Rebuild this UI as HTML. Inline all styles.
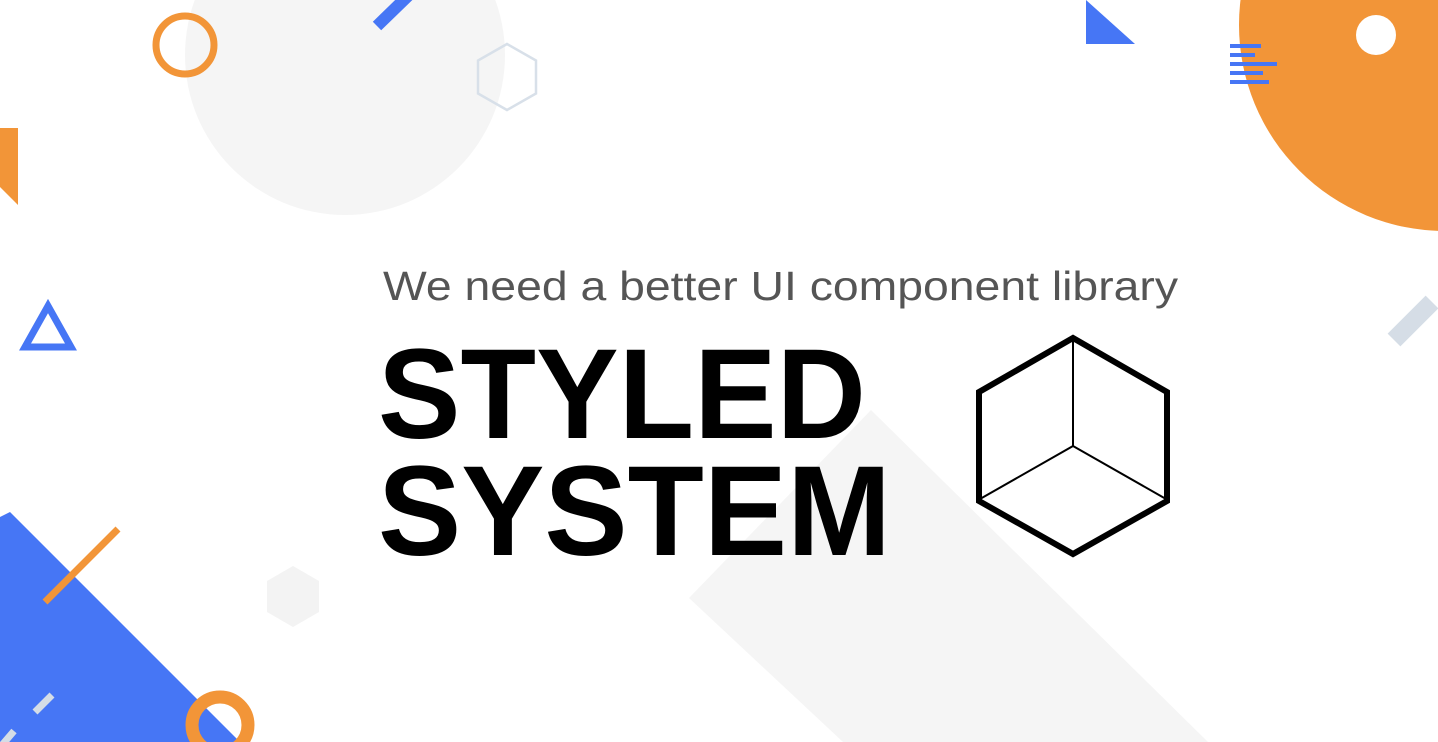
<!DOCTYPE html>
<html><head><meta charset="utf-8"><style>
html,body{margin:0;padding:0;background:#fff;overflow:hidden}
svg{display:block}
</style></head><body>
<svg width="1438" height="742" viewBox="0 0 1438 742" xmlns="http://www.w3.org/2000/svg">
<rect width="1438" height="742" fill="#fff"/>
<circle cx="345" cy="55" r="160" fill="#f5f5f5"/>
<polygon points="689,598 871,410 1208,742 843,742" fill="#f5f5f5"/>
<circle cx="185" cy="45" r="29" fill="none" stroke="#f29538" stroke-width="7"/>
<line x1="377" y1="26" x2="412" y2="-8" stroke="#4676f5" stroke-width="12"/>
<polygon points="507,44 536,60.5 536,93.5 507,110 478,93.5 478,60.5" fill="none" stroke="#d8e0e9" stroke-width="2.5"/>
<polygon points="0,128 18,128 18,205 0,187" fill="#f29538"/>
<polygon points="48,306 71,347 25,347" fill="none" stroke="#4676f5" stroke-width="7"/>
<polygon points="1086,0 1086,44 1135,44" fill="#4676f5"/>
<circle cx="1445" cy="25" r="206" fill="#f29538"/>
<circle cx="1376" cy="35" r="20" fill="#fff"/>
<g fill="#4676f5">
<rect x="1230" y="44" width="31" height="4"/>
<rect x="1230" y="53" width="25" height="4"/>
<rect x="1230" y="62" width="47" height="4"/>
<rect x="1230" y="71" width="33" height="4"/>
<rect x="1230" y="80" width="39" height="4"/>
</g>
<line x1="1394" y1="340" x2="1432" y2="302" stroke="#d5dde6" stroke-width="18"/>
<polygon points="0,517 10,512 240,742 0,742" fill="#4676f5"/>
<line x1="45" y1="602" x2="118" y2="529" stroke="#f29538" stroke-width="7"/>
<line x1="35" y1="712" x2="52" y2="695" stroke="#d5dde6" stroke-width="7"/>
<line x1="2" y1="745" x2="14" y2="731" stroke="#d5dde6" stroke-width="7"/>
<circle cx="220" cy="725" r="28" fill="none" stroke="#f29538" stroke-width="13"/>
<polygon points="293,566 319,581 319,612 293,627 267,612 267,581" fill="#f3f3f3"/>
<text x="383" y="300" font-family="Liberation Sans, sans-serif" font-size="41" fill="#555" textLength="795" lengthAdjust="spacingAndGlyphs">We need a better UI component library</text>
<text x="378" y="438" font-family="Liberation Sans, sans-serif" font-size="128" font-weight="bold" fill="#000" textLength="488" lengthAdjust="spacingAndGlyphs">STYLED</text>
<text x="378" y="555" font-family="Liberation Sans, sans-serif" font-size="128" font-weight="bold" fill="#000" textLength="513" lengthAdjust="spacingAndGlyphs">SYSTEM</text>
<polygon points="1073,338 1167,392 1167,501 1073,554 979,501 979,392" fill="none" stroke="#000" stroke-width="6" stroke-linejoin="miter"/>
<path d="M1073,338 L1073,446 L980,499 M1073,446 L1166,499" fill="none" stroke="#000" stroke-width="2"/>
</svg>
</body></html>
